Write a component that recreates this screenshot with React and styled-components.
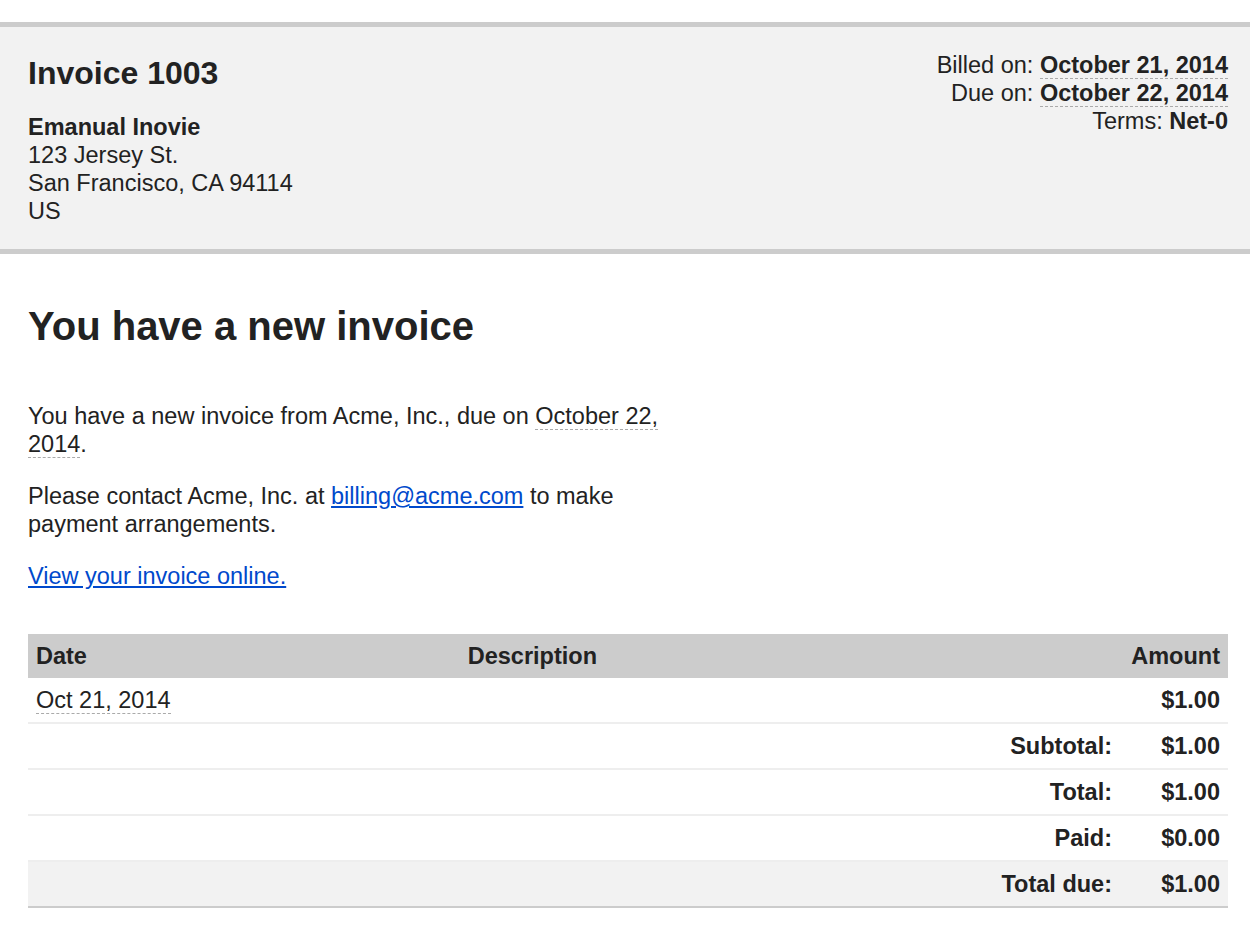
import React from "react";
import styled, { createGlobalStyle } from "styled-components";

const Global = createGlobalStyle`
  body { margin: 0; background: #fff; color: #222; font-family: "Liberation Sans", Arial, sans-serif; font-size: 23.5px; line-height: 28px; }
`;

const Header = styled.header`
  margin-top: 22px;
  background: #f2f2f2;
  border-top: 5px solid #ccc;
  border-bottom: 5px solid #ccc;
  padding: 22px 22px 24px 28px;
  display: flex;
  justify-content: space-between;
  align-items: flex-start;
`;

const InvoiceTitle = styled.h1`
  margin: 4px 0 20px;
  font-size: 32px;
  line-height: 40px;
`;

const Name = styled.div`
  font-weight: bold;
`;

const Meta = styled.div`
  text-align: right;
  margin-top: 2px;
`;

const Dated = styled.span`
  border-bottom: 1px dashed #aaa;
`;

const Main = styled.main`
  padding: 24px 22px 0 28px;
`;

const Heading = styled.h2`
  margin: 26px 0 54px;
  font-size: 40px;
  line-height: 44px;
`;

const Para = styled.p`
  margin: 0 0 24px;
  width: 640px;
`;

const Link = styled.a`
  color: #0049cc;
`;

const Table = styled.table`
  width: 100%;
  border-collapse: collapse;
  margin-top: 44px;
`;

const Th = styled.th`
  background: #ccc;
  height: 44px;
  padding: 0 8px;
  text-align: ${(p) => p.align || "left"};
  width: ${(p) => p.w || "auto"};
`;

const Td = styled.td`
  height: 44px;
  padding: 0 8px;
  border-top: ${(p) => (p.first ? "none" : "2px solid #eee")};
  text-align: ${(p) => p.align || "left"};
  font-weight: ${(p) => (p.bold ? "bold" : "normal")};
  width: ${(p) => p.w || "auto"};
`;

const TotalRow = styled.tr`
  background: ${(p) => (p.shade ? "#f2f2f2" : "transparent")};
  border-bottom: ${(p) => (p.shade ? "2px solid #ccc" : "none")};
`;

const totals = [
  ["Subtotal:", "$1.00"],
  ["Total:", "$1.00"],
  ["Paid:", "$0.00"],
  ["Total due:", "$1.00", true],
];

export default function App() {
  return (
    <>
      <Global />
      <Header>
        <div>
          <InvoiceTitle>Invoice 1003</InvoiceTitle>
          <Name>Emanual Inovie</Name>
          <div>123 Jersey St.</div>
          <div>San Francisco, CA 94114</div>
          <div>US</div>
        </div>
        <Meta>
          <div>Billed on: <b><Dated>October 21, 2014</Dated></b></div>
          <div>Due on: <b><Dated>October 22, 2014</Dated></b></div>
          <div>Terms: <b>Net-0</b></div>
        </Meta>
      </Header>
      <Main>
        <Heading>You have a new invoice</Heading>
        <Para>
          You have a new invoice from Acme, Inc., due on <Dated>October 22, 2014</Dated>.
        </Para>
        <Para>
          Please contact Acme, Inc. at <Link href="#">billing@acme.com</Link> to make payment arrangements.
        </Para>
        <Para><Link href="#">View your invoice online.</Link></Para>
        <Table>
          <thead>
            <tr>
              <Th w="244px">Date</Th>
              <Th align="center">Description</Th>
              <Th align="right" colSpan={2} w="194px">Amount</Th>
            </tr>
          </thead>
          <tbody>
            <tr>
              <Td first><Dated>Oct 21, 2014</Dated></Td>
              <Td first />
              <Td first align="right" bold colSpan={2}>$1.00</Td>
            </tr>
            {totals.map(([label, value, shade]) => (
              <TotalRow key={label} shade={shade ? 1 : 0}>
                <Td colSpan={3} align="right" bold>{label}</Td>
                <Td align="right" bold w="92px">{value}</Td>
              </TotalRow>
            ))}
          </tbody>
        </Table>
      </Main>
    </>
  );
}
